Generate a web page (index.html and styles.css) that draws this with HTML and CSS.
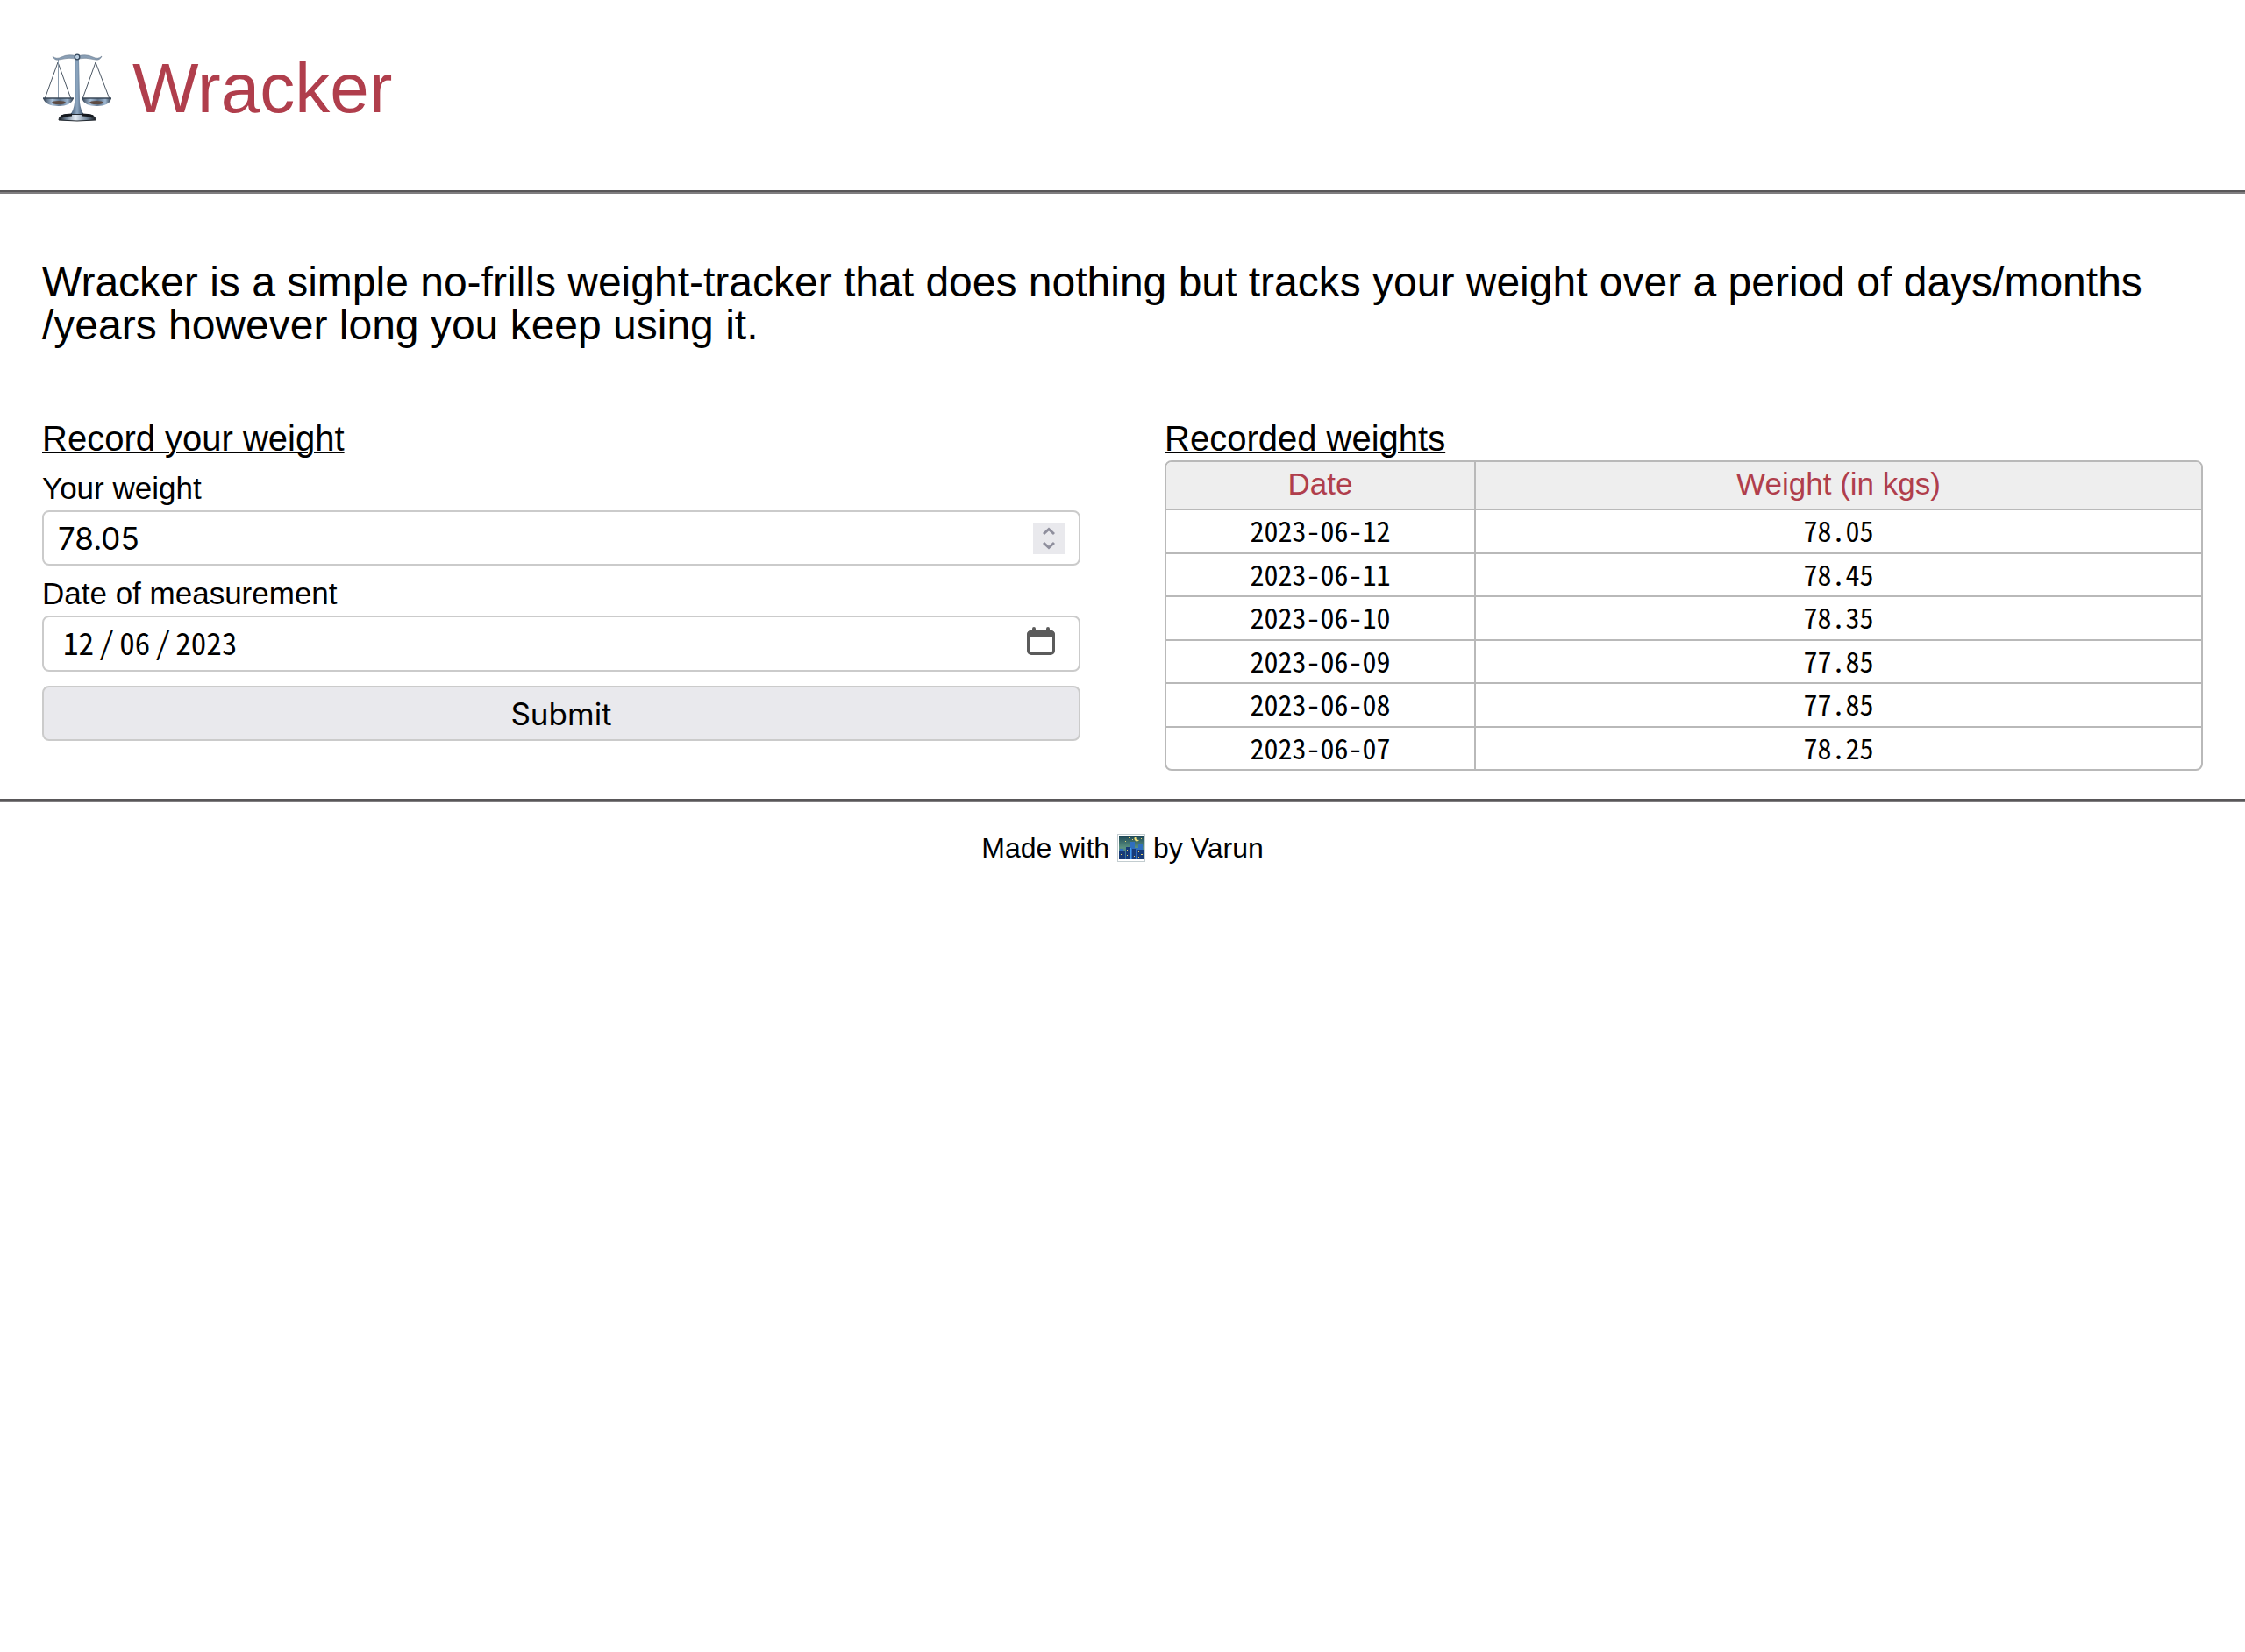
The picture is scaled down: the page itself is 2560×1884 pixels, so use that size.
FILE: index.html
```html
<!DOCTYPE html>
<html lang="en">
<head>
<meta charset="utf-8">
<title>Wracker</title>
<link rel="stylesheet" href="styles.css">
</head>
<body>
<header class="site-header">
  <h1 class="brand">
    <svg class="brand-icon" viewBox="0 0 80 80" aria-hidden="true">
      <defs>
        <linearGradient id="pole" x1="0" x2="1" y1="0" y2="0">
          <stop offset="0" stop-color="#3f566f"/><stop offset=".5" stop-color="#8ea8c2"/><stop offset="1" stop-color="#2c4058"/>
        </linearGradient>
        <linearGradient id="pan" x1="0" x2="1" y1="0" y2="0">
          <stop offset="0" stop-color="#2c3a4b"/><stop offset=".3" stop-color="#a9c0d8"/><stop offset=".55" stop-color="#5d738c"/><stop offset=".8" stop-color="#9fb8d2"/><stop offset="1" stop-color="#26323f"/>
        </linearGradient>
        <linearGradient id="base" x1="0" x2="1" y1="0" y2="0">
          <stop offset="0" stop-color="#15191e"/><stop offset=".2" stop-color="#6d7f92"/><stop offset=".45" stop-color="#e6eef6"/><stop offset=".75" stop-color="#74889c"/><stop offset="1" stop-color="#15191e"/>
        </linearGradient>
      </defs>
      <g fill="none" stroke="#4a5663" stroke-width="1">
        <path d="M18 10 3 52M18 10 33 52M61 10 46 52M61 10 77 52"/>
        <path d="M18.500 6V52M61.500 6V52" stroke="#8c9dae"/>
      </g>
      <path d="M12 3Q16 7 22 4Q30 0 40 3Q50 0 58 4Q64 7 68 3Q66 8 61 7Q50 4 40 6Q30 4 19 7Q14 8 12 3Z" fill="#8a9fb5" stroke="#5b6d80" stroke-width=".5"/>
      <path d="M38 6H42L43 56Q44 65 48 70H32Q36 65 37 56Z" fill="url(#pole)"/>
      <circle cx="40" cy="4" r="2.800" fill="#b9cde0" stroke="#33465a" stroke-width="1.300"/>
      <path d="M1 51H36Q33 60 18.500 60Q4 60 1 51Z" fill="url(#pan)"/>
      <path d="M45 51H79Q77 60 62 60Q48 60 45 51Z" fill="url(#pan)"/>
      <path d="M1 51H36M45 51H79" stroke="#3a4858" stroke-width="1.500"/>
      <ellipse cx="19" cy="56" rx="8" ry="2" fill="#5d4b43"/>
      <ellipse cx="62" cy="56" rx="8" ry="2" fill="#5d4b43"/>
      <path d="M19 76Q19 70 28 69.500H52Q61 70 61 76Q40 78 19 76Z" fill="url(#base)" stroke="#22282f" stroke-width="1"/>
      <path d="M22 72Q28 70 34 70M46 70Q52 70 58 72" fill="none" stroke="#15191e" stroke-width="3"/>
    </svg>
    <span>Wracker</span>
  </h1>
</header>
<hr class="rule">
<main>
  <p class="intro">Wracker is a simple no-frills weight-tracker that does nothing but tracks your weight over a period of days/months<wbr>/years however long you keep using it.</p>
  <div class="columns">
    <section>
      <h2 class="section-title">Record your weight</h2>
      <form class="form">
        <label class="label" for="weight">Your weight</label>
        <div class="field">
          <input class="input" id="weight" type="text" inputmode="decimal" value="78.05">
          <button class="stepper" type="button" aria-label="Change weight">
            <svg viewBox="0 0 36 36" aria-hidden="true"><path d="M12 13 18 7.500 24 13M12 23 18 28.500 24 23"/></svg>
          </button>
        </div>
        <label class="label" for="date">Date of measurement</label>
        <div class="field field-date">
          <input class="input input-date" id="date" type="text" value="12&#8198;/&#8198;06&#8198;/&#8198;2023">
          <button class="picker" type="button" aria-label="Open calendar">
            <svg viewBox="0 0 32 32" aria-hidden="true">
              <path class="cal-fill" d="M0 9Q0 4 5 4H6V2Q6 0 8 0T10 2V4H22V2Q22 0 24 0T26 2V4H27Q32 4 32 9V12H0Z"/>
              <rect class="cal-line" x="1.500" y="5.500" width="29" height="25" rx="3.500"/>
            </svg>
          </button>
        </div>
        <button class="submit" type="submit">Submit</button>
      </form>
    </section>
    <section>
      <h2 class="section-title">Recorded weights</h2>
      <table class="weights">
        <thead><tr><th class="date-col">Date</th><th>Weight (in kgs)</th></tr></thead>
        <tbody>
          <tr><td>2023-06-12</td><td>78.05</td></tr>
          <tr><td>2023-06-11</td><td>78.45</td></tr>
          <tr><td>2023-06-10</td><td>78.35</td></tr>
          <tr><td>2023-06-09</td><td>77.85</td></tr>
          <tr><td>2023-06-08</td><td>77.85</td></tr>
          <tr><td>2023-06-07</td><td>78.25</td></tr>
        </tbody>
      </table>
    </section>
  </div>
</main>
<hr class="rule">
<footer class="site-footer">
  <span>Made with</span>
  <svg class="city" viewBox="0 0 32 32" aria-hidden="true">
    <defs><linearGradient id="sky" x1="0" x2="0" y1="0" y2="1"><stop offset="0" stop-color="#1d4656"/><stop offset=".5" stop-color="#5a9080"/><stop offset="1" stop-color="#2a6cae"/></linearGradient></defs>
    <rect x=".5" y=".5" width="31" height="31" fill="#fff" stroke="#c3cdd0"/>
    <rect x="2" y="2" width="28" height="27" fill="url(#sky)"/>
    <path d="M15 9H20V29H15ZM24 11H29V29H24ZM20 16H24V29H20ZM3 17H7V29H3Z" fill="#2f6fc0"/>
    <path d="M10 15H14V29H10ZM17 17H21V29H17ZM22 18H30V29H22ZM2 20H9V29H2Z" fill="#173b78"/>
    <path d="M14 16H16V29H14Z" fill="#3f9cf0"/>
    <path d="M22 3Q20 7 25 7Q22 10 20 7T22 3Z" fill="#f3e27a"/>
    <path d="M5 4h1v1h-1zM13 4h1v1h-1zM9 8h1v1h-1zM17 6h1v1h-1zM27 5h1v1h-1zM4 11h1v1h-1zM11 18h1v1h-1zM18 19h2v1h-2zM24 20h1v1h-1zM27 23h2v1h-2zM4 23h1v1h-1zM11 24h1v1h-1zM19 25h1v1h-1zM24 26h1v1h-1z" fill="#e5d470"/>
  </svg>
  <span>by Varun</span>
</footer>
</body>
</html>
```
FILE: styles.css
```css
* {
  box-sizing: border-box;
}

body {
  margin: 0;
  background: #fff;
  color: #000;
  font-family: "Liberation Sans", Helvetica, Arial, sans-serif;
  font-size: 32px;
}

.site-header {
  padding: 53px 48px 68px;
}

.brand {
  display: flex;
  align-items: center;
  gap: 23px;
  margin: 0;
  color: #b03e4c;
  font-size: 80px;
  font-weight: 400;
  line-height: 96px;
}

.brand-icon {
  width: 80px;
  height: 80px;
}

.rule {
  height: 4px;
  margin: 0;
  border: 0;
  border-top: 2px solid #595759;
  border-bottom: 2px solid #807e80;
}

.intro {
  margin: 0;
  padding: 76px 48px 0;
  font-size: 48px;
  line-height: 49px;
}

.columns {
  display: grid;
  grid-template-columns: 1fr 1fr;
  gap: 96px;
  padding: 80px 48px 32px;
}

.section-title {
  margin: 0;
  font-size: 40px;
  font-weight: 400;
  line-height: 50px;
  text-decoration: underline;
  text-decoration-thickness: 2px;
}

.form {
  display: flex;
  flex-direction: column;
}

.label {
  padding: 10px 0 3px;
  font-size: 35px;
  line-height: 44px;
}

.field {
  display: flex;
  align-items: center;
  height: 63px;
  padding: 0 16px;
  border: 2px solid #cbcbcb;
  border-radius: 8px;
}

.field-date {
  height: 64px;
  padding: 0 27px 6px 22px;
}

.input {
  flex: 1;
  min-width: 0;
  padding: 0;
  border: 0;
  outline: 0;
  background: none;
  color: #000;
  font-family: Inter, sans-serif;
  font-size: 35px;
}

.input-date {
  font-family: "Noto Sans Mono CJK SC", "Liberation Mono", monospace;
  font-variant-numeric: slashed-zero;
}

.stepper,
.picker {
  padding: 0;
  border: 0;
  background: none;
}

.stepper {
  width: 36px;
  height: 36px;
  background: #e9e9ed;
}

.stepper svg {
  display: block;
  fill: none;
  stroke: #8f8f9d;
  stroke-width: 3;
}

.picker {
  width: 32px;
  height: 32px;
}

.picker svg {
  display: block;
}

.cal-fill {
  fill: #5b5b5b;
}

.cal-line {
  fill: none;
  stroke: #5b5b5b;
  stroke-width: 3;
}

.submit {
  height: 63px;
  margin-top: 16px;
  padding: 0;
  border: 2px solid #cbcbcb;
  border-radius: 8px;
  background: #e9e9ed;
  color: #000;
  font-family: Inter, sans-serif;
  font-size: 35px;
}

.weights {
  width: 100%;
  height: 354px;
  border: 2px solid #b9b9b9;
  border-radius: 8px;
  border-collapse: separate;
  border-spacing: 0;
  overflow: hidden;
  text-align: center;
}

.weights th {
  padding: 7px 0 10px;
  background: #eee;
  color: #b03e4c;
  font-size: 35px;
  font-weight: 400;
  line-height: 36px;
}

.weights td {
  padding: 0 0 2px;
  border-top: 2px solid #b9b9b9;
  font-family: "Noto Sans Mono CJK SC", "Liberation Mono", monospace;
  font-size: 32px;
  font-variant-numeric: slashed-zero;
  line-height: 45px;
}

.weights th + th,
.weights td + td {
  border-left: 2px solid #b9b9b9;
}

.weights .date-col {
  width: 351px;
}

.site-footer {
  display: flex;
  justify-content: center;
  align-items: center;
  gap: 9px;
  padding: 34px 48px;
  line-height: 36px;
}

.city {
  width: 32px;
  height: 32px;
}
```
